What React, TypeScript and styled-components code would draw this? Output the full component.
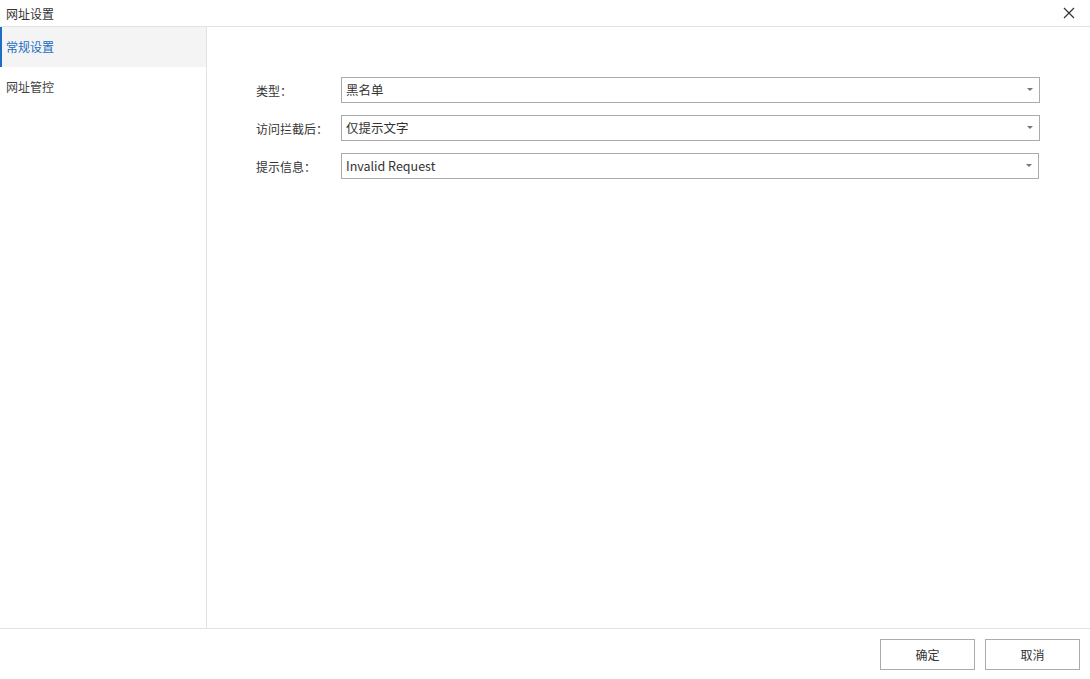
import React from "react";
import styled, { createGlobalStyle } from "styled-components";

const Global = createGlobalStyle`
  html, body { margin: 0; padding: 0; background: #fff; }
  body { font-family: "Microsoft YaHei", "Noto Sans CJK SC", "Noto Sans", sans-serif; font-size: 12px; color: #333; }
  * { box-sizing: border-box; }
`;

const Window = styled.div`
  width: 1090px;
  height: 679px;
  display: flex;
  flex-direction: column;
  background: #fff;
`;

const TitleBar = styled.div`
  height: 27px;
  flex: none;
  display: flex;
  align-items: center;
  justify-content: space-between;
  padding: 0 14px 0 6px;
  border-bottom: 1px solid #e3e3e3;
  font-size: 12px;
  color: #333;
`;

const CloseButton = styled.button`
  border: none;
  background: none;
  padding: 0;
  width: 14px;
  height: 14px;
  display: flex;
  align-items: center;
  justify-content: center;
  cursor: pointer;
`;

const Body = styled.div`
  flex: 1;
  display: flex;
  min-height: 0;
`;

const Sidebar = styled.nav`
  width: 207px;
  flex: none;
  border-right: 1px solid #e3e3e3;
  display: flex;
  flex-direction: column;
`;

const NavItem = styled.div<{ $active?: boolean }>`
  height: 40px;
  display: flex;
  align-items: center;
  padding: 0 0 2px 4px;
  border-left: 2px solid ${(p) => (p.$active ? "#1b6ec2" : "transparent")};
  background: ${(p) => (p.$active ? "#f4f4f4" : "transparent")};
  color: ${(p) => (p.$active ? "#1b6ec2" : "#444")};
  font-size: 12px;
`;

const Content = styled.div`
  flex: 1;
  padding: 50px 0 0 49px;
  display: flex;
  flex-direction: column;
  gap: 12px;
`;

const Row = styled.div`
  display: flex;
  align-items: center;
  height: 26px;
`;

const Label = styled.div`
  width: 85px;
  font-size: 12px;
  color: #333;
`;

const Select = styled.div<{ $w: number }>`
  width: ${(p) => p.$w}px;
  height: 26px;
  border: 1px solid #ababab;
  display: flex;
  align-items: center;
  justify-content: space-between;
  padding: 0 6px 1px 4px;
  font-size: 12.5px;
  color: #333;
`;

const Arrow = styled.span`
  width: 0;
  height: 0;
  border-left: 3px solid transparent;
  border-right: 3px solid transparent;
  border-top: 3px solid #777;
`;

const Footer = styled.div`
  height: 51px;
  flex: none;
  border-top: 1px solid #e3e3e3;
  display: flex;
  align-items: flex-start;
  justify-content: flex-end;
  gap: 10px;
  padding: 10px 10px 0 0;
`;

const Button = styled.button`
  width: 95px;
  height: 31px;
  border: 1px solid #ababab;
  background: #fff;
  font-family: inherit;
  font-size: 12px;
  color: #333;
  cursor: pointer;
`;

const rows: { label: string; value: string; w: number }[] = [
  { label: "类型：", value: "黑名单", w: 699 },
  { label: "访问拦截后：", value: "仅提示文字", w: 699 },
  { label: "提示信息：", value: "Invalid Request", w: 698 },
];

export default function App() {
  return (
    <Window>
      <Global />
      <TitleBar>
        <span>网址设置</span>
        <CloseButton aria-label="close">
          <svg width="12" height="12" viewBox="0 0 12 12">
            <path d="M1 1L11 11M11 1L1 11" stroke="#333" strokeWidth="1.2" />
          </svg>
        </CloseButton>
      </TitleBar>
      <Body>
        <Sidebar>
          <NavItem $active>常规设置</NavItem>
          <NavItem>网址管控</NavItem>
        </Sidebar>
        <Content>
          {rows.map((r) => (
            <Row key={r.label}>
              <Label>{r.label}</Label>
              <Select $w={r.w}>
                <span>{r.value}</span>
                <Arrow />
              </Select>
            </Row>
          ))}
        </Content>
      </Body>
      <Footer>
        <Button>确定</Button>
        <Button>取消</Button>
      </Footer>
    </Window>
  );
}
